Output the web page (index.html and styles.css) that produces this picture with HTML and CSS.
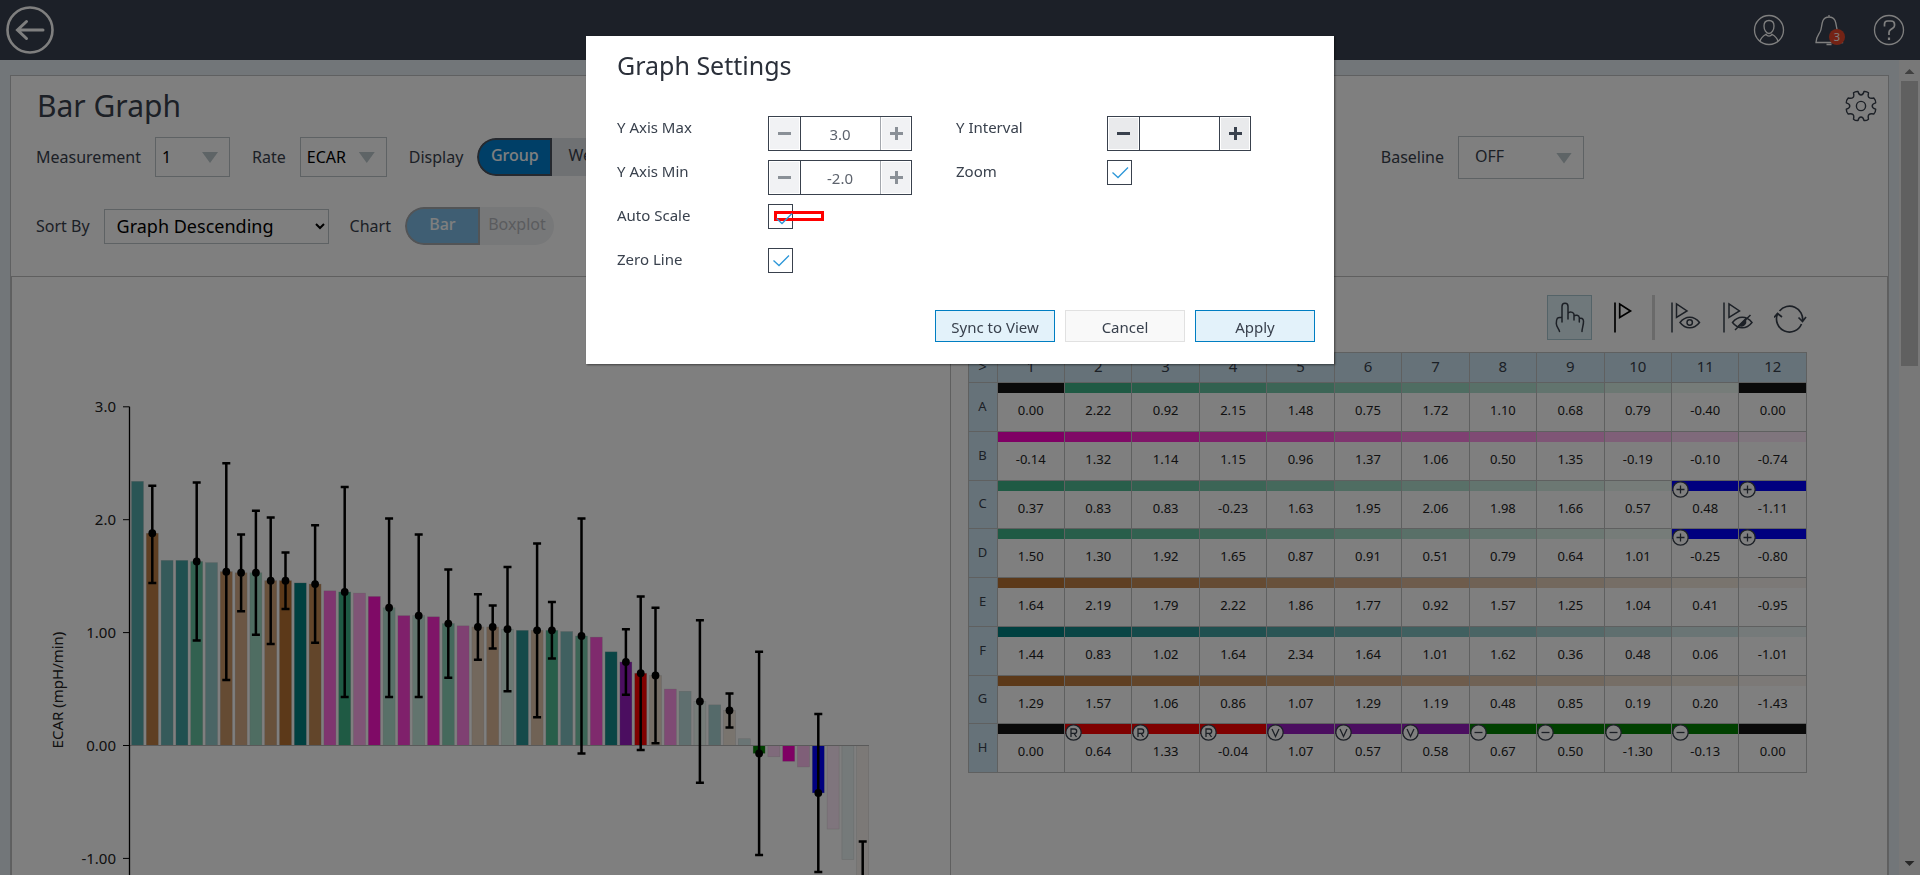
FILE: index.html
```html
<!DOCTYPE html>
<html lang="en">
<head>
<meta charset="utf-8">
<title>Bar Graph</title>
<link rel="stylesheet" href="styles.css">
</head>
<body>
<div class="app">
  <header class="topbar">
    <button class="icon-btn" aria-label="Back">
      <svg width="48" height="48" viewBox="0 0 48 48" fill="none" stroke="#fff" stroke-width="3" stroke-linecap="round"><circle cx="24" cy="24" r="22.5" stroke-width="2.6"/><path d="M37 24H12M20.500 15.500L11.500 24l9 8.500"/></svg>
    </button>
    <nav class="topbar-actions">
      <button class="icon-btn" aria-label="Account">
        <svg width="32" height="32" viewBox="0 0 32 32" fill="none" stroke="#fff" stroke-width="1.300"><circle cx="16" cy="16" r="14.500"/><path d="M16 6.500c-3.300 0-5 2.300-5 5.500 0 3.800 2.200 7.500 5 7.500s5-3.700 5-7.500c0-3.200-1.700-5.500-5-5.500zM7 27.500c.6-3.500 2.500-5 6-7.200 1.500 2.300 4.500 2.300 6 0 3.500 2.200 5.400 3.700 6 7.200"/></svg>
      </button>
      <button class="icon-btn bell" aria-label="Notifications">
        <svg width="32" height="32" viewBox="0 0 32 32" fill="none" stroke="#fff" stroke-width="1.300"><path d="M16 1v2M3 28.500h26.500c0-5-2-6.500-4.500-10.500-1.800-3-1.300-7.500-3-11.500C20.800 4 18.500 3 16 3s-4.800 1-6 3.500c-1.700 4-1.200 8.500-3 11.500-2.500 4-4 5.500-4 10.500zM13.500 30.500h5"/></svg>
        <span class="badge">3</span>
      </button>
      <button class="icon-btn" aria-label="Help">
        <svg width="32" height="32" viewBox="0 0 32 32" fill="none" stroke="#fff" stroke-width="1.300"><circle cx="16" cy="16" r="14.500"/><path d="M11.500 12.500V10q0-3 3-3h3.500q3.500 0 3.500 3v1.500q0 1.500-1.500 2.500l-2.500 1.700q-1.500 1-1.500 2.800V21" stroke-width="1.700"/><path d="M16 23.500v2.500" stroke-width="2.200"/></svg>
      </button>
    </nav>
  </header>

  <div class="viewport">
    <main class="card">
      <section class="controls">
        <div class="title-row">
          <h1 class="page-title">Bar Graph</h1>
          <button class="icon-btn" aria-label="Settings">
            <svg width="32" height="32" viewBox="0 0 32 32" fill="none" stroke="#39414d" stroke-width="1.400" stroke-linejoin="round"><circle cx="16" cy="16" r="4.600"/><path d="M13 1.500c.6 2.600 1.600 3.500 3 3.500s2.400-.9 3-3.500c1.600-.2 3.300.3 4.500 1.300-.6 2.500-.5 3.800.5 4.700s2.500 1 4.800.5c1.200 1.300 1.900 3 1.900 4.800-2.500.7-3.500 1.800-3.500 3.200s1 2.500 3.500 3.200c0 1.800-.7 3.500-1.900 4.800-2.300-.5-3.800-.4-4.800.5s-1.100 2.200-.5 4.700c-1.200 1-2.900 1.500-4.500 1.300-.6-2.600-1.600-3.500-3-3.500s-2.400.9-3 3.500c-1.600.2-3.300-.3-4.500-1.300.6-2.500.5-3.800-.5-4.700s-2.500-1-4.800-.5c-1.200-1.300-1.900-3-1.900-4.800 2.500-.7 3.500-1.800 3.500-3.200s-1-2.500-3.500-3.200c0-1.800.7-3.500 1.900-4.800 2.300.5 3.800.4 4.800-.5s1.100-2.200.5-4.700c1.200-1 2.900-1.500 4.500-1.300z"/></svg>
          </button>
        </div>
        <div class="control-row">
          <label class="lbl" for="measurement">Measurement</label>
          <span class="drop drop-s"><select id="measurement"><option>1</option></select></span>
          <label class="lbl" for="rate">Rate</label>
          <span class="drop drop-m"><select id="rate"><option>ECAR</option></select></span>
          <span class="lbl">Display</span>
          <div class="toggle"><button class="seg on">Group</button><button class="seg narrow">Well</button></div>
          <div class="baseline">
            <label class="lbl" for="baseline">Baseline</label>
            <span class="drop drop-l"><select id="baseline"><option>OFF</option></select></span>
          </div>
        </div>
        <div class="control-row second">
          <label class="lbl" for="sort">Sort By</label>
          <select class="sort" id="sort"><option>Graph Descending</option></select>
          <span class="lbl">Chart</span>
          <div class="toggle faded"><button class="seg on" disabled>Bar</button><button class="seg" disabled>Boxplot</button></div>
        </div>
      </section>

      <div class="panels">
        <section class="panel chart-panel">
          <svg id="chart" class="chart" width="936" height="620" viewBox="12 276 936 620" role="img" aria-label="ECAR bar graph"></svg>
        </section>
        <section class="panel plate-panel">
          <div class="tools">
            <button class="tool active" aria-label="Select"><svg width="33" height="33" viewBox="0 0 33 33" fill="none" stroke="#39414d" stroke-width="1.500" stroke-linecap="round"><path d="M6.500 30.500c-.2-2.500-3.200-4.500-3.200-8 0-3 .2-4 1-5.200.8-.8 2.500-1 3.700-.8M9 21V5.500C9 1.200 15 1.200 15 5.500V18M15 12.500c1-2 5.500-2 6 1V19M21 15c1.500-1.500 5-1 5.300 1.500V21M26.300 17.500c2 -.8 4 0 4.200 2.500 .2 4-1.500 7-1.500 10.500"/></svg></button>
            <button class="tool flag" aria-label="Flag"><svg width="30" height="33" viewBox="0 0 30 33" fill="none" stroke="#000" stroke-width="1.700"><path d="M8 1.500v30M12.700 3v13.500L23.500 10z"/></svg></button>
            <span class="sep"></span>
            <button class="tool" aria-label="Show flagged"><svg width="37" height="33" viewBox="0 0 37 33" fill="none" stroke="#39414d" stroke-width="1.500"><path d="M2 1.500v30M6.500 3v13.500L17 10z"/><path d="M10 21.500c5.500-7 14-7 19.500 0-5.500 7-14 7-19.500 0z"/><circle cx="19.700" cy="21.500" r="2.700"/></svg></button>
            <button class="tool" aria-label="Hide flagged"><svg width="37" height="33" viewBox="0 0 37 33" fill="none" stroke="#39414d" stroke-width="1.500"><path d="M2 1.500v30M7 3v13.500L17.500 10z"/><path d="M10.500 21.500c5.500-7 14-7 19.500 0-5.500 7-14 7-19.500 0zM13 29L28.500 14"/><path d="M17 24.500l6.500-6.500v4q-2 4-6.500 2.500z" fill="#39414d"/></svg></button>
            <button class="tool" aria-label="Refresh"><svg width="33" height="33" viewBox="0 0 33 33" fill="none" stroke="#39414d" stroke-width="1.700"><path d="M5.500 10A13 13 0 0 1 28.500 20M27.500 23A13 13 0 0 1 3.500 13M0 16.500l3.500-4 4.500 3.500M24.500 16.500l4 4 3.500-4.500"/></svg></button>
          </div>
          <table class="plate" id="plate"></table>
        </section>
      </div>
    </main>
    <div class="scrollbar" aria-hidden="true"><span class="arrow up"></span><span class="thumb"></span><span class="arrow down"></span></div>
  </div>
</div>

<div class="backdrop">
  <form class="modal" role="dialog" aria-labelledby="dlg-title">
    <h2 class="modal-title" id="dlg-title">Graph Settings</h2>
    <div class="fields">
      <div class="col">
        <div class="field"><label for="ymax">Y Axis Max</label>
          <div class="spinner muted"><button type="button" aria-label="Decrease" class="step minus"></button><input id="ymax" type="text" value="3.0"><button type="button" aria-label="Increase" class="step plus"></button></div></div>
        <div class="field"><label for="ymin">Y Axis Min</label>
          <div class="spinner muted"><button type="button" aria-label="Decrease" class="step minus"></button><input id="ymin" type="text" value="-2.0"><button type="button" aria-label="Increase" class="step plus"></button></div></div>
        <div class="field"><label for="auto">Auto Scale</label>
          <span class="check shifted"><input id="auto" type="checkbox" checked><span class="marker"></span><svg width="23" height="23" viewBox="0 0 23 23" fill="none" stroke="#2d97d8" stroke-width="1.300"><path d="M4.500 12.500l5.500 5L20 7.500"/></svg></span></div>
        <div class="field"><label for="zero">Zero Line</label>
          <span class="check"><input id="zero" type="checkbox" checked><svg width="23" height="23" viewBox="0 0 23 23" fill="none" stroke="#2d97d8" stroke-width="1.300"><path d="M4.500 12.500l5.500 5L20 7.500"/></svg></span></div>
      </div>
      <div class="col">
        <div class="field"><label for="yint">Y Interval</label>
          <div class="spinner"><button type="button" aria-label="Decrease" class="step minus"></button><input id="yint" type="text" value=""><button type="button" aria-label="Increase" class="step plus"></button></div></div>
        <div class="field"><label for="zoom">Zoom</label>
          <span class="check"><input id="zoom" type="checkbox" checked><svg width="23" height="23" viewBox="0 0 23 23" fill="none" stroke="#2d97d8" stroke-width="1.300"><path d="M4.500 12.500l5.500 5L20 7.500"/></svg></span></div>
      </div>
    </div>
    <div class="actions">
      <button type="button" class="btn">Sync to View</button>
      <button type="button" class="btn plain">Cancel</button>
      <button type="button" class="btn">Apply</button>
    </div>
  </form>
</div>
<script src="app.js"></script>
</body>
</html>
```
FILE: styles.css
```css
* { box-sizing: border-box; }
html, body { height: 100%; margin: 0; }
body { font-family: "Noto Sans", sans-serif; font-size: 16px; color: #39414d; overflow: hidden; }
button, input, select { font: inherit; color: inherit; }

.app { height: 100vh; display: flex; flex-direction: column; background: #e4edf3; }
.icon-btn { position: relative; display: flex; padding: 0; border: 0; background: none; }

.topbar { flex: none; display: flex; align-items: center; justify-content: space-between; height: 60px; padding: 0 15px 0 6px; background: #394150; }
.topbar-actions { display: flex; gap: 28px; }
.badge { position: absolute; right: 0; bottom: 1px; width: 16px; height: 16px; border-radius: 50%; background: #e8472b; color: #fff; font-size: 11px; line-height: 16px; text-align: center; }

.viewport { flex: 1; min-height: 0; display: flex; }
.card { flex: 1; display: flex; flex-direction: column; margin: 15px 10px 0; border: 1px solid #bfc0c2; border-bottom: 0; background: #fff; overflow: hidden; }
.scrollbar { flex: none; width: 21px; display: flex; flex-direction: column; align-items: center; background: #f1f1f1; padding: 9px 0; }
.thumb { width: 17px; height: 285px; margin: 7px 0 auto; background: #c1c1c1; }
.arrow { width: 10px; height: 5px; background: #808080; }
.up { clip-path: polygon(50% 0, 100% 100%, 0 100%); }
.down { background: #505050; clip-path: polygon(0 0, 100% 0, 50% 100%); }

.controls { flex: none; height: 200px; padding: 9px 25px 0; }
.title-row { display: flex; justify-content: space-between; align-items: center; height: 41px; padding-left: 1px; margin-right: -14px; }
.page-title { margin: 0; font-size: 30px; font-weight: 400; line-height: 41px; }
.control-row { display: flex; align-items: center; height: 40px; margin-top: 11px; }
.control-row.second { margin-top: 29px; }
.lbl { margin-right: 14px; line-height: 22px; }
.drop { position: relative; display: flex; height: 40px; margin-right: 22px; }
.drop select { appearance: none; width: 100%; padding: 0 0 0 6px; border: 1px solid #bcc4c8; border-radius: 0; background: none; color: #000; }
.drop::after { content: ""; position: absolute; right: 12px; top: 15px; width: 16px; height: 11px; background: #bcc8cc; clip-path: polygon(0 0, 100% 0, 50% 100%); }
.drop-s { width: 75px; }
.drop-m { width: 87px; }
.drop-l { width: 126px; height: 43px; margin-right: 0; }
.drop-l select { padding: 0 0 2px 16px; color: #39414d; }
.drop-l::after { top: 17px; }
.baseline { display: flex; align-items: center; margin-left: auto; margin-right: 279px; }
.sort { width: 225px; height: 35px; margin-right: 21px; padding: 0 0 0 8px; border: 1px solid #bcc4c8; border-radius: 0; background: #fff; color: #000; font-size: 18px; }
.toggle { display: flex; height: 38px; border-radius: 19px; background: #dfe2e6; overflow: hidden; }
.seg { width: 74px; padding: 0 0 5px; border: 0; background: none; color: #39414d; }
.seg.narrow { width: 64px; }
.seg.on { width: 75px; border: 2px solid #4b535e; border-radius: 19px 0 0 19px; background: #007ece; color: #fff; font-weight: 500; }
.faded { opacity: 0.5; }
.faded .seg { color: #6c727c; }
.faded .seg.on { color: #fff; }

.panels { flex: 1; min-height: 0; display: grid; grid-template-columns: minmax(0, 1fr) minmax(0, 1fr); border: 1px solid #bfbfbf; border-bottom: 0; }
.panel { overflow: hidden; }
.plate-panel { border-left: 1px solid #bfbfbf; padding: 18px 80px 0 17px; }
.chart { display: block; }
.chart text { font-size: 15px; fill: #222; }

.tools { display: flex; justify-content: flex-end; align-items: center; gap: 15px; height: 45px; margin-bottom: 12px; }
.tool { display: flex; justify-content: center; align-items: center; padding: 0; border: 0; background: none; }
.tool.active { width: 45px; height: 45px; border: 1px solid #a9c6d0; background: #dff0f6; }
.sep { width: 3px; height: 45px; background: #d4d4d4; }

.plate { width: 100%; height: 421px; table-layout: fixed; border-collapse: collapse; }
.plate th, .plate td { padding: 0; border: 1px solid #bfc0c0; font-weight: 400; text-align: center; }
.plate th { background: #cce5f2; }
.plate thead th { height: 30px; padding-bottom: 3px; font-size: 15px; line-height: 20px; }
.plate .corner { width: 29px; }
.plate tbody th { padding-bottom: 2px; font-size: 13px; line-height: 18px; }
.plate td { position: relative; vertical-align: top; font-size: 13px; line-height: 18px; color: #222; }
.strip { height: 10px; margin-bottom: 8px; }
.mark { position: absolute; left: 0; top: 0; }

.backdrop { position: fixed; inset: 0; display: flex; justify-content: center; align-items: flex-start; padding-top: 36px; background: rgba(0, 0, 0, 0.5); }
.modal { width: 748px; padding: 12px 19px 22px 31px; background: #fff; box-shadow: 1px 1px 2px rgba(0, 0, 0, 0.5); font-size: 15px; }
.modal-title { margin: 0 0 34px; font-size: 25px; font-weight: 400; line-height: 34px; color: #2b303a; }
.fields { display: flex; gap: 44px; }
.col { width: 295px; }
.field { display: flex; align-items: flex-start; justify-content: space-between; height: 44px; }
.field label { line-height: 22px; }
.spinner { display: flex; width: 144px; height: 35px; border: 1px solid #39414d; }
.spinner input { width: 81px; padding: 0; border: 1px solid #39414d; border-width: 0 1px; border-radius: 0; text-align: center; background: #fff; color: #39414d; }
.step { position: relative; flex: 1; margin: 1px; padding: 0; border: 0; background: #e9eaec; }
.step::before, .step.plus::after { content: ""; position: absolute; left: 50%; top: 50%; width: 13px; height: 3px; margin: -2px 0 0 -6px; background: #39414d; }
.step.plus::after { width: 3px; height: 13px; margin: -7px 0 0 -1px; }
.muted .step { background: #f1f2f4; }
.muted .step::before, .muted .step.plus::after { background: #8a9097; }
.muted input { color: #5d636d; border-right-color: #a3a7ad; }
.check { position: relative; width: 25px; height: 25px; margin-right: 119px; }
.check input { appearance: none; display: block; width: 25px; height: 25px; margin: 0; border: 1px solid #39414d; background: #fff; }
.check svg { position: absolute; left: 1px; top: 0; }
.check.shifted svg { left: 4px; top: 2px; }
.marker { position: absolute; left: 6px; top: 7px; width: 50px; height: 10px; border: 3px solid #f00; }
.actions { display: flex; justify-content: flex-end; gap: 10px; margin-top: 18px; }
.btn { width: 120px; height: 32px; padding: 1px 0 0; border: 1px solid #007ec2; background: #e3f2fa; }
.btn.plain { border-color: #e1e1e1; background: #f9f9f9; }
```
FILE: app.js
```js
const COLORS = {
  mint: [62, 180, 137], pink: [255, 0, 200], brown: [184, 115, 51], teal: [0, 128, 128],
  black: [21, 21, 21], red: [255, 0, 0], purple: [150, 28, 192], green: [0, 128, 0], blue: [0, 0, 255]
};
const STEPS = { mint: 10, pink: 12, brown: 12, teal: 12 };

// Shade n of a colour family, fading toward white.
function shade(name, n) {
  const a = STEPS[name] ? 1 - n / STEPS[name] : 1;
  return 'rgb(' + COLORS[name].map(c => Math.round(c * a + 255 * (1 - a))).join(',') + ')';
}

// [family, shade, mean, upper, lower]
const BARS = [
  ['teal', 4, 2.34], ['brown', 1, 1.88, 2.30, 1.44], ['teal', 5, 1.64], ['teal', 3, 1.64],
  ['mint', 2, 1.63, 2.33, 0.93], ['teal', 7, 1.62], ['brown', 3, 1.54, 2.50, 0.58],
  ['brown', 5, 1.53, 1.87, 1.19], ['mint', 5, 1.53, 2.08, 0.98], ['brown', 4, 1.46, 2.02, 0.90],
  ['brown', 0, 1.46, 1.71, 1.21], ['teal', 0, 1.44], ['brown', 2, 1.43, 1.95, 0.91],
  ['pink', 5, 1.37], ['mint', 0, 1.36, 2.29, 0.43], ['pink', 8, 1.35], ['pink', 1, 1.32],
  ['mint', 6, 1.22, 2.01, 0.43], ['pink', 3, 1.15], ['mint', 7, 1.15, 1.87, 0.43],
  ['pink', 2, 1.14], ['mint', 4, 1.08, 1.56, 0.60], ['pink', 6, 1.06],
  ['brown', 8, 1.05, 1.34, 0.76], ['brown', 6, 1.05, 1.24, 0.86], ['mint', 8, 1.03, 1.58, 0.48],
  ['teal', 2, 1.02], ['brown', 7, 1.02, 1.79, 0.25], ['mint', 1, 1.02, 1.27, 0.77],
  ['teal', 6, 1.01], ['mint', 3, 0.97, 2.01, -0.07], ['pink', 4, 0.96], ['teal', 1, 0.83],
  ['purple', 0, 0.74, 1.03, 0.45], ['red', 0, 0.64, 1.32, -0.04], ['brown', 9, 0.62, 1.22, 0.02],
  ['pink', 7, 0.50], ['teal', 9, 0.48], ['mint', 9, 0.39, 1.11, -0.33], ['teal', 8, 0.36],
  ['brown', 10, 0.31, 0.46, 0.16], ['teal', 10, 0.06], ['green', 0, -0.07, 0.83, -0.97],
  ['pink', 10, -0.10], ['pink', 0, -0.14], ['pink', 9, -0.19], ['blue', 0, -0.42, 0.28, -1.12],
  ['pink', 11, -0.74], ['teal', 11, -1.01], ['brown', 11, -1.19, -0.85, -1.53]
];

const ZERO = 744.5, UNIT = 112.9, AXIS = 129.5;
const y = v => ZERO - v * UNIT;
let g = '';
BARS.forEach(([name, n, v], i) => {
  const x = 131.5 + i * 14.8;
  g += `<rect x="${x}" y="${Math.min(y(v), ZERO)}" width="12" height="${Math.abs(v) * UNIT}" fill="${shade(name, n)}" stroke="#aaa" stroke-opacity=".4" stroke-width=".6"/>`;
});
g += `<path d="M${AXIS} ${ZERO}H869" stroke="#b4b4b4"/>`;
BARS.forEach(([, , v, hi, lo], i) => {
  if (hi === undefined) return;
  const c = 137.5 + i * 14.8;
  g += `<path d="M${c} ${y(hi)}V${y(lo)}M${c - 4} ${y(hi)}h8M${c - 4} ${y(lo)}h8" stroke="#000" stroke-width="2.5"/><circle cx="${c}" cy="${y(v)}" r="3.9"/>`;
});
g += `<path d="M${AXIS} ${y(3)}V896" stroke="#000" stroke-width="1.3"/>`;
[[3, '3.0'], [2, '2.0'], [1, '1.00'], [0, '0.00'], [-1, '-1.00']].forEach(([v, t]) => {
  g += `<path d="M123 ${y(v)}H${AXIS}" stroke="#000"/><text x="116" y="${y(v) + 5.5}" text-anchor="end">${t}</text>`;
});
g += `<text transform="translate(63 689) rotate(-90)" text-anchor="middle">ECAR (mpH/min)</text>`;
document.getElementById('chart').innerHTML = g;

const PLATE = {
  A: [0.00, 2.22, 0.92, 2.15, 1.48, 0.75, 1.72, 1.10, 0.68, 0.79, -0.40, 0.00],
  B: [-0.14, 1.32, 1.14, 1.15, 0.96, 1.37, 1.06, 0.50, 1.35, -0.19, -0.10, -0.74],
  C: [0.37, 0.83, 0.83, -0.23, 1.63, 1.95, 2.06, 1.98, 1.66, 0.57, 0.48, -1.11],
  D: [1.50, 1.30, 1.92, 1.65, 0.87, 0.91, 0.51, 0.79, 0.64, 1.01, -0.25, -0.80],
  E: [1.64, 2.19, 1.79, 2.22, 1.86, 1.77, 0.92, 1.57, 1.25, 1.04, 0.41, -0.95],
  F: [1.44, 0.83, 1.02, 1.64, 2.34, 1.64, 1.01, 1.62, 0.36, 0.48, 0.06, -1.01],
  G: [1.29, 1.57, 1.06, 0.86, 1.07, 1.29, 1.19, 0.48, 0.85, 0.19, 0.20, -1.43],
  H: [0.00, 0.64, 1.33, -0.04, 1.07, 0.57, 0.58, 0.67, 0.50, -1.30, -0.13, 0.00]
};
const FAMILY = { B: 'pink', E: 'brown', F: 'teal', G: 'brown' };
const H_GROUPS = ['black', 'red', 'red', 'red', 'purple', 'purple', 'purple', 'green', 'green', 'green', 'green', 'black'];

function well(row, c) {
  if (row === 'A') return c === 0 || c === 11 ? ['black', 0] : ['mint', c - 1];
  if (row === 'C' || row === 'D') return c > 9 ? ['blue', 0] : ['mint', c];
  if (row === 'H') return [H_GROUPS[c], 0];
  return [FAMILY[row], c];
}

const GLYPHS = {
  blue: 'M4.500 8.500h8M8.500 4.500v8',
  green: 'M4.500 8.500h8',
  purple: 'M5 5l3.500 7.500L12 5',
  red: 'M6 13V5h3.500a2.200 2.200 0 0 1 0 4.400H6M9 9.400L11.500 13'
};
const mark = name => GLYPHS[name]
  ? `<svg class="mark" width="17" height="17" viewBox="0 0 17 17" fill="none" stroke="#39414d" stroke-width="1.300"><circle cx="8.500" cy="8.500" r="7.700" fill="#fff"/><path d="${GLYPHS[name]}"/></svg>`
  : '';

let t = '<thead><tr><th class="corner">&gt;</th>';
for (let c = 1; c <= 12; c++) t += `<th>${c}</th>`;
t += '</tr></thead><tbody>';
for (const row in PLATE) {
  t += `<tr><th>${row}</th>`;
  PLATE[row].forEach((v, c) => {
    const [name, n] = well(row, c);
    t += `<td><div class="strip" style="background:${shade(name, n)}"></div>${v.toFixed(2)}${mark(name)}</td>`;
  });
  t += '</tr>';
}
document.getElementById('plate').innerHTML = t + '</tbody>';
```
